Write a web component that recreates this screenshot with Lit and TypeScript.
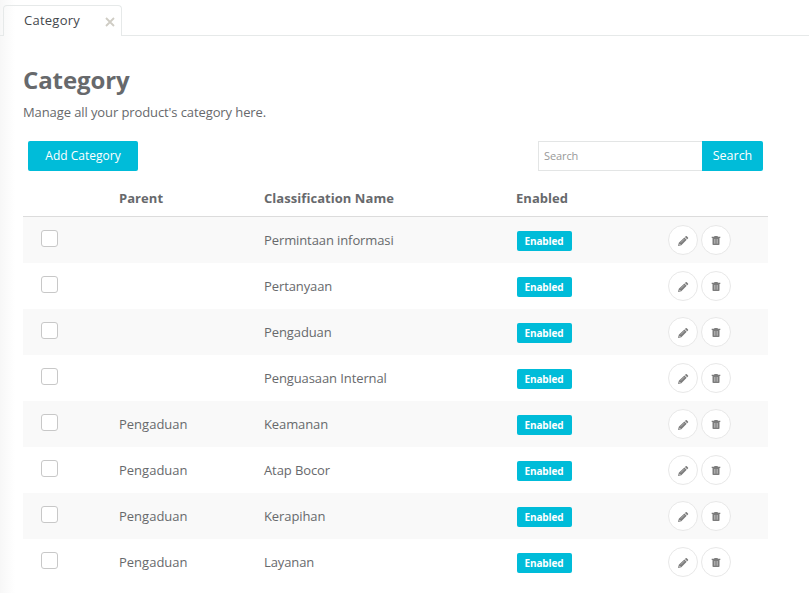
import { LitElement, html, css } from "lit";
import { customElement, property } from "lit/decorators.js";

interface Category {
  parent: string;
  name: string;
}

const CATEGORIES: Category[] = [
  { parent: "", name: "Permintaan informasi" },
  { parent: "", name: "Pertanyaan" },
  { parent: "", name: "Pengaduan" },
  { parent: "", name: "Penguasaan Internal" },
  { parent: "Pengaduan", name: "Keamanan" },
  { parent: "Pengaduan", name: "Atap Bocor" },
  { parent: "Pengaduan", name: "Kerapihan" },
  { parent: "Pengaduan", name: "Layanan" },
];

@customElement("category-row")
export class CategoryRow extends LitElement {
  @property({ attribute: false }) category!: Category;

  static styles = css`
    :host {
      display: grid;
      grid-template-columns: 96px 145px 252px 152px 1fr;
      align-items: center;
      height: 46px;
      line-height: 20px;
    }
    .name {
      letter-spacing: -0.1px;
    }
    .check {
      appearance: none;
      box-sizing: border-box;
      display: block;
      width: 17px;
      height: 17px;
      margin: 0 0 3px 18px;
      border: 1px solid #c8c8c8;
      border-radius: 3px;
      background: #fff;
    }
    .badge {
      display: block;
      box-sizing: border-box;
      width: 55px;
      height: 20px;
      margin: 2px 0 0 1px;
      padding-right: 1px;
      border-radius: 2px;
      background: #00bcd9;
      color: #fff;
      font-size: 10px;
      font-weight: 700;
      letter-spacing: -0.1px;
      line-height: 21px;
      text-align: center;
    }
    .actions {
      display: flex;
      gap: 3px;
    }
    .round {
      box-sizing: border-box;
      display: flex;
      align-items: center;
      justify-content: center;
      width: 30px;
      height: 30px;
      padding: 0;
      border: 1px solid #e8e8e8;
      border-radius: 50%;
      background: #fff;
      color: #7c7c7c;
    }
    .icon {
      display: block;
      width: 12px;
      height: 12px;
    }
  `;

  render() {
    return html`
      <input class="check" type="checkbox" />
      <span>${this.category.parent}</span>
      <span class="name">${this.category.name}</span>
      <span class="badge">Enabled</span>
      <div class="actions">
        <button class="round" aria-label="Edit">
          <svg class="icon" viewBox="0 0 12 12" fill="currentColor">
            <path d="M7.9 3 8.7 2.2q.6-.5 1.1 0l1.2 1.2q.5.6 0 1.1l-.8.8zM7.4 3.5 9.7 5.8 4.3 11.2 1 12l.8-3.2z" />
            <path d="M3.8 8.6 7.4 5" stroke="#c4c4c4" stroke-width=".7" />
            <path d="M2.3 9.9 3.2 10.8" stroke="#fff" stroke-width=".9" />
          </svg>
        </button>
        <button class="round" aria-label="Delete">
          <svg class="icon" viewBox="0 0 12 12" fill="currentColor">
            <path d="M4.3 2h3.4v.7H10.3V4H1.7V2.7h2.6zM2.5 4h7v6.2q0 .8-.8.8H3.3q-.8 0-.8-.8z" />
            <path d="M4.5 5v4.7M6 5v4.7M7.5 5v4.7" stroke="#c0c0c0" stroke-width=".7" />
          </svg>
        </button>
      </div>
    `;
  }
}

@customElement("app-root")
export class AppRoot extends LitElement {
  static styles = css`
    :host {
      display: block;
      box-sizing: border-box;
      height: 593px;
      overflow: hidden;
      background: linear-gradient(to right, #f7f7f7, #fff 15px);
      color: #67696c;
      font: 13px/20px "Open Sans", "Noto Sans", sans-serif;
    }
    .tabs {
      display: flex;
      box-sizing: border-box;
      height: 36px;
      padding-top: 5px;
    }
    .before,
    .after {
      border-bottom: 1px solid #e6e9e9;
    }
    .before {
      width: 3px;
    }
    .after {
      flex: 1;
    }
    .tab {
      display: flex;
      box-sizing: border-box;
      justify-content: space-between;
      width: 119px;
      padding: 4px 6px 0 20px;
      border: 1px solid #e6e9e9;
      border-bottom: 0;
      border-radius: 4px 4px 0 0;
      color: #45484d;
      letter-spacing: 0.25px;
    }
    .close {
      width: 10px;
      height: 10px;
      margin-top: 7px;
    }
    .page {
      width: 745px;
      margin-left: 23px;
    }
    .title {
      margin: 0;
      padding-top: 28px;
      font-size: 24px;
      font-weight: 700;
      letter-spacing: -0.1px;
      line-height: 32px;
    }
    .intro {
      margin: 6px 0 19px;
      letter-spacing: -0.1px;
    }
    .toolbar {
      display: flex;
      justify-content: space-between;
      height: 30px;
      padding: 0 5px;
    }
    .btn {
      box-sizing: border-box;
      height: 30px;
      padding: 0;
      border: 0;
      border-radius: 2px;
      background: #00bcd9;
      color: #fff;
      font: inherit;
      line-height: 30px;
    }
    .add {
      width: 110px;
      font-size: 12px;
    }
    .search {
      display: flex;
    }
    .field {
      box-sizing: border-box;
      width: 164px;
      height: 30px;
      padding: 0 5px 2px;
      border: 1px solid #e3e5e5;
      border-right: 0;
      border-radius: 0;
      background: #fff;
      font: inherit;
      font-size: 11px;
      letter-spacing: -0.1px;
    }
    .field::placeholder {
      color: #999;
      opacity: 1;
    }
    .go {
      width: 61px;
      padding-bottom: 1px;
      border-radius: 0 2px 2px 0;
      font-size: 12.5px;
      line-height: 29px;
    }
    .head {
      display: grid;
      grid-template-columns: 96px 145px 252px 1fr;
      box-sizing: border-box;
      height: 46px;
      padding-top: 17px;
      border-bottom: 1px solid #dcdcdc;
      font-weight: 700;
      letter-spacing: 0.05px;
    }
    .striped {
      background: #f9f9f9;
    }
  `;

  render() {
    return html`
      <nav class="tabs">
        <div class="before"></div>
        <div class="tab">
          <span>Category</span>
          <svg class="close" viewBox="0 0 10 10" fill="none" stroke="#cfccc4" stroke-width="1.8">
            <path d="M1 1 9 9M9 1 1 9" />
          </svg>
        </div>
        <div class="after"></div>
      </nav>
      <main class="page">
        <h1 class="title">Category</h1>
        <p class="intro">Manage all your product's category here.</p>
        <div class="toolbar">
          <button class="btn add">Add Category</button>
          <div class="search">
            <input class="field" type="text" placeholder="Search" />
            <button class="btn go">Search</button>
          </div>
        </div>
        <div class="head">
          <span></span><span>Parent</span><span>Classification Name</span><span>Enabled</span>
        </div>
        ${CATEGORIES.map(
          (c, i) => html`<category-row class=${i % 2 ? "" : "striped"} .category=${c}></category-row>`,
        )}
      </main>
    `;
  }
}
